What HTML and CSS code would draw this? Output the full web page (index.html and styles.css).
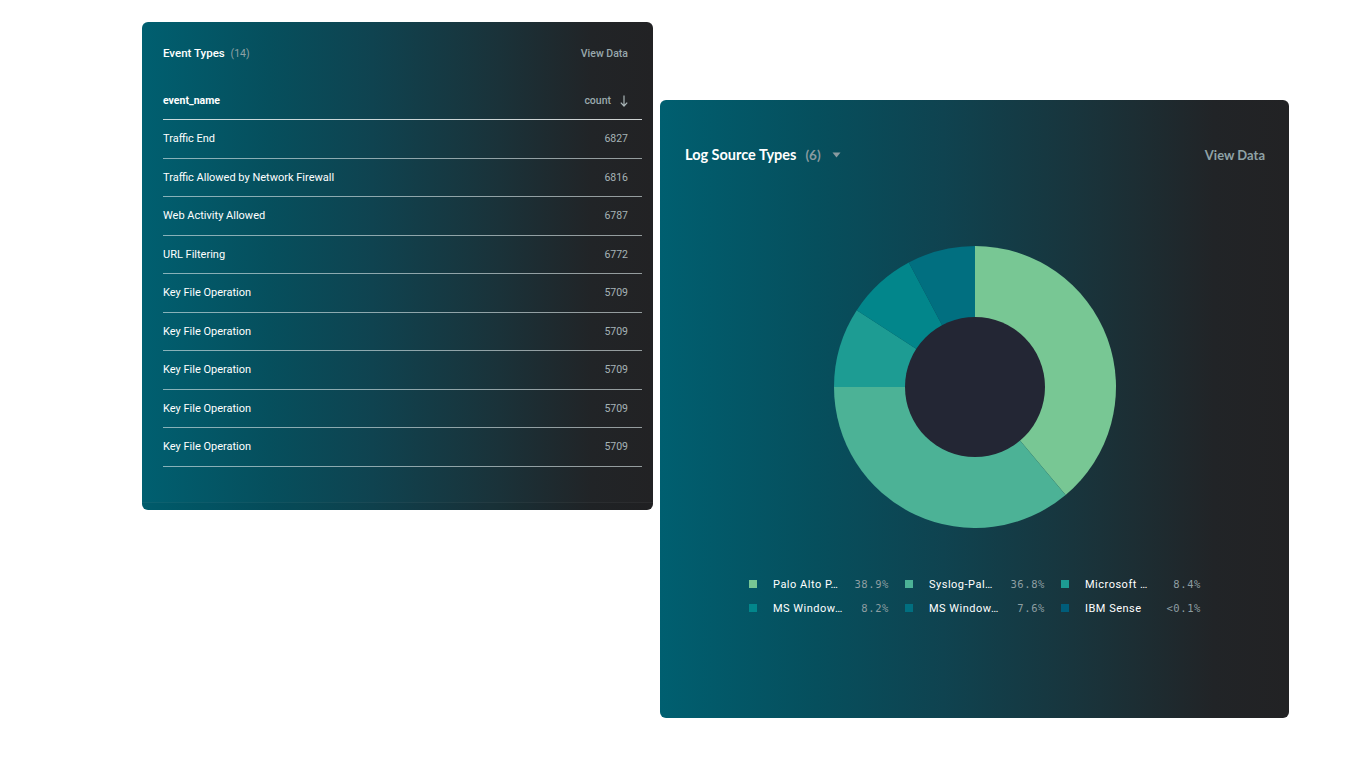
FILE: index.html
```html
<!DOCTYPE html>
<html lang="en">
<head>
<meta charset="utf-8">
<title>Dashboard widgets</title>
<link rel="stylesheet" href="styles.css">
</head>
<body>
<div class="stage">
  <section class="card card-events">
    <header class="events-head">
      <div class="events-title">Event Types <span class="muted-count">(14)</span></div>
      <span class="view-link small">View Data</span>
    </header>
    <div class="events-table">
      <div class="row head-row">
        <span class="col-name">event_name</span>
        <span class="col-count">count
          <svg class="sort-icon" width="8" height="12" viewBox="0 0 8 12"><path d="M4 0.5V11M0.8 7.6L4 11L7.2 7.6" fill="none" stroke="#aab6b8" stroke-width="1.2"/></svg>
        </span>
      </div>
      <div class="row"><span class="cell-name">Traffic End</span><span class="cell-count">6827</span></div>
      <div class="row"><span class="cell-name">Traffic Allowed by Network Firewall</span><span class="cell-count">6816</span></div>
      <div class="row"><span class="cell-name">Web Activity Allowed</span><span class="cell-count">6787</span></div>
      <div class="row"><span class="cell-name">URL Filtering</span><span class="cell-count">6772</span></div>
      <div class="row"><span class="cell-name">Key File Operation</span><span class="cell-count">5709</span></div>
      <div class="row"><span class="cell-name">Key File Operation</span><span class="cell-count">5709</span></div>
      <div class="row"><span class="cell-name">Key File Operation</span><span class="cell-count">5709</span></div>
      <div class="row"><span class="cell-name">Key File Operation</span><span class="cell-count">5709</span></div>
      <div class="row"><span class="cell-name">Key File Operation</span><span class="cell-count">5709</span></div>
    </div>
    <div class="card-foot"></div>
  </section>

  <section class="card card-logs">
    <header class="logs-head">
      <div class="logs-title">Log Source Types <span class="logs-count">(6)</span>
        <svg class="caret" width="9" height="6" viewBox="0 0 9 6"><path d="M0.5 0.5H8.5L4.5 5.5Z" fill="#8a9ba0"/></svg>
      </div>
      <span class="view-link large">View Data</span>
    </header>
    <div class="donut-wrap">
      <svg class="donut" width="282" height="282" viewBox="0 0 282 282">
        <path d="M141 141L141 0A141 141 0 0 1 231.63 249.01Z" fill="#78c794"/>
        <path d="M141 141L231.63 249.01A141 141 0 0 1 0 141Z" fill="#4cb296"/>
        <path d="M141 141L0 141A141 141 0 0 1 22.75 64.21Z" fill="#1d9c93"/>
        <path d="M141 141L22.75 64.21A141 141 0 0 1 74.8 16.51Z" fill="#02868b"/>
        <path d="M141 141L74.8 16.51A141 141 0 0 1 141 0Z" fill="#016f80"/>
        <circle cx="141" cy="141" r="70" fill="#232634"/>
      </svg>
    </div>
    <div class="legend">
      <div class="legend-item"><span class="swatch sw1"></span><span class="legend-label">Palo Alto P…</span><span class="legend-pct">38.9%</span></div>
      <div class="legend-item"><span class="swatch sw2"></span><span class="legend-label">Syslog-Pal…</span><span class="legend-pct">36.8%</span></div>
      <div class="legend-item"><span class="swatch sw3"></span><span class="legend-label">Microsoft …</span><span class="legend-pct">8.4%</span></div>
      <div class="legend-item"><span class="swatch sw4"></span><span class="legend-label">MS Window…</span><span class="legend-pct">8.2%</span></div>
      <div class="legend-item"><span class="swatch sw5"></span><span class="legend-label">MS Window…</span><span class="legend-pct">7.6%</span></div>
      <div class="legend-item"><span class="swatch sw6"></span><span class="legend-label">IBM Sense</span><span class="legend-pct">&lt;0.1%</span></div>
    </div>
  </section>
</div>
</body>
</html>
```

FILE: styles.css
```css
html, body {
  margin: 0;
  padding: 0;
  background: #ffffff;
}

body {
  font-family: Roboto, "Liberation Sans", sans-serif;
}

.stage {
  display: flex;
  align-items: flex-start;
  gap: 7px;
  padding: 22px 0 0 142px;
}

.card {
  border-radius: 6px;
  color: #ffffff;
  background: linear-gradient(90deg, #005f70 0%, #064f5d 25%, #0f4350 45%, #1a3239 70%, #212427 88%, #222224 100%);
  overflow: hidden;
}

/* ---------- Event types card ---------- */
.card-events {
  width: 511px;
  height: 488px;
  display: flex;
  flex-direction: column;
  font-family: Roboto, "Liberation Sans", sans-serif;
}

.events-head {
  display: flex;
  justify-content: space-between;
  align-items: center;
  height: 16px;
  padding: 23px 25px 0 21px;
}

.events-title {
  font-size: 11.5px;
  font-weight: 500;
  line-height: 16px;
}

.muted-count {
  color: #8fa1a5;
  font-weight: 400;
  font-size: 10.5px;
  margin-left: 3px;
}

.view-link {
  color: #98a8ac;
  font-weight: 500;
}

.view-link.small {
  font-size: 10.5px;
}

.events-table {
  margin: 21px 11px 0 21px;
}

.row {
  display: flex;
  justify-content: space-between;
  align-items: center;
  height: 37.5px;
  padding-right: 14px;
  border-bottom: 1px solid rgba(220, 230, 232, 0.62);
  font-size: 11px;
}

.row.head-row {
  height: 37px;
  border-bottom-color: rgba(235, 240, 240, 0.85);
  font-size: 10.5px;
}

.col-name {
  font-weight: 700;
}

.col-count {
  display: flex;
  align-items: center;
  gap: 9px;
  color: #9aa9ad;
  font-weight: 500;
}

.sort-icon {
  display: block;
}

.cell-name {
  color: #ffffff;
}

.cell-count {
  color: #a6b3b6;
  font-size: 10.5px;
}

.card-foot {
  margin-top: auto;
  height: 7px;
  border-top: 1px solid rgba(255, 255, 255, 0.05);
  background: rgba(0, 0, 0, 0.04);
}

/* ---------- Log source card ---------- */
.card-logs {
  width: 629px;
  height: 618px;
  margin-top: 78px;
  display: flex;
  flex-direction: column;
}

.logs-head {
  display: flex;
  justify-content: space-between;
  align-items: center;
  height: 16px;
  padding: 47px 24px 0 25px;
  font-family: Lato, "Open Sans", sans-serif;
}

.logs-title {
  display: flex;
  align-items: center;
  font-size: 14.5px;
  font-weight: 700;
  line-height: 16px;
}

.logs-count {
  color: #8a9ba0;
  font-weight: 700;
  font-size: 13.5px;
  margin-left: 9px;
}

.caret {
  display: block;
  margin-left: 11px;
}

.view-link.large {
  font-size: 13px;
  font-weight: 700;
  color: #8fa2a6;
}

.donut-wrap {
  display: flex;
  justify-content: center;
  margin-top: 83px;
}

.donut {
  display: block;
}

.legend {
  display: grid;
  grid-template-columns: repeat(3, 156px);
  grid-auto-rows: 24px;
  margin-top: 44px;
  padding-left: 89px;
}

.legend-item {
  display: flex;
  align-items: center;
}

.swatch {
  width: 8px;
  height: 8px;
  flex: none;
}

.sw1 { background: #78c794; }
.sw2 { background: #4cb296; }
.sw3 { background: #1d9c93; }
.sw4 { background: #02868b; }
.sw5 { background: #016f80; }
.sw6 { background: #005d7a; }

.legend-label {
  margin-left: 16px;
  width: 74px;
  flex: none;
  white-space: nowrap;
  font-family: Roboto, "Liberation Sans", sans-serif;
  font-size: 11px;
  letter-spacing: 0.5px;
  color: #ffffff;
}

.legend-pct {
  width: 42px;
  flex: none;
  text-align: right;
  white-space: nowrap;
  font-family: "DejaVu Sans Mono", "Liberation Mono", monospace;
  font-size: 10.5px;
  letter-spacing: 0.6px;
  color: #8e9ea2;
}
```
